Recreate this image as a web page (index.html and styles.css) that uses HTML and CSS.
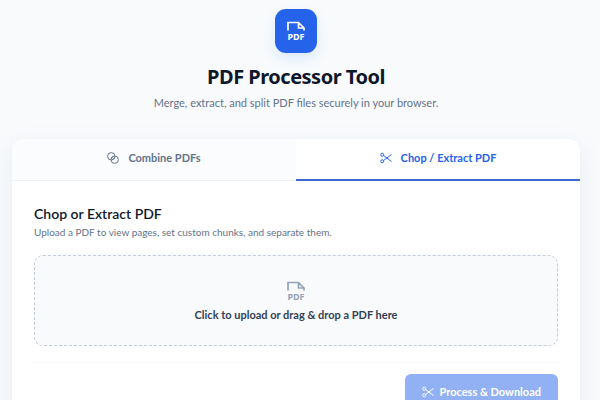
FILE: index.html
```
<!DOCTYPE html>
<html lang="en">

<head>
  <meta charset="UTF-8" />
  <meta name="viewport" content="width=device-width, initial-scale=1.0" />
  <title>PDF Processor Tool</title>
  <link rel="stylesheet" href="styles.css">
</head>

<body>
  <div class="container">
    <header class="header">
      <div class="logo">
        <svg class="icon-large" viewBox="0 0 20 20">
          <path d="M2 9.5V1.5H12.5L18 7V9.5M12.5 1.5V7H18" />
          <text x="10" y="19" text-anchor="middle">PDF</text>
        </svg>
      </div>
      <h1>PDF Processor Tool</h1>
      <p>Merge, extract, and split PDF files securely in your browser.</p>
    </header>

    <main class="card">
      <div class="tabs" role="tablist">
        <button type="button" class="tab" role="tab" aria-selected="false">
          <svg class="icon" viewBox="0 0 12 12">
            <circle cx="4.3" cy="4.3" r="3.7" />
            <circle cx="7.7" cy="7.7" r="3.7" />
            <path d="M4.3 6.3L6.3 4.3M5.6 7.6L7.6 5.6" />
          </svg>
          Combine PDFs
        </button>
        <button type="button" class="tab active" role="tab" aria-selected="true">
          <svg class="icon" viewBox="0 0 12 12">
            <circle cx="2.2" cy="2.7" r="1.5" />
            <circle cx="2.2" cy="9.3" r="1.5" />
            <path d="M3.5 3.5L11.5 9.5M3.5 8.5L11.5 2.5" />
          </svg>
          Chop / Extract PDF
        </button>
      </div>

      <section class="panel">
        <h2>Chop or Extract PDF</h2>
        <p class="description">Upload a PDF to view pages, set custom chunks, and separate them.</p>

        <label class="dropzone" for="pdf-file">
          <svg class="icon-large" viewBox="0 0 20 20">
            <path d="M2 9.5V1.5H12.5L18 7V9.5M12.5 1.5V7H18" />
            <text x="10" y="19" text-anchor="middle">PDF</text>
          </svg>
          <span>Click to upload or drag &amp; drop a PDF here</span>
        </label>
        <input type="file" id="pdf-file" class="file-input" accept="application/pdf">

        <div class="actions">
          <button type="button" class="process" disabled>
            <svg class="icon" viewBox="0 0 12 12">
              <circle cx="2.2" cy="2.7" r="1.5" />
              <circle cx="2.2" cy="9.3" r="1.5" />
              <path d="M3.5 3.5L11.5 9.5M3.5 8.5L11.5 2.5" />
            </svg>
            Process &amp; Download
          </button>
        </div>
      </section>
    </main>
  </div>
</body>

</html>
```

FILE: styles.css
```
* {
  box-sizing: border-box;
}

body {
  margin: 0;
  background-color: #f8fafc;
  color: #0f172a;
  font-family: Lato, "Open Sans", sans-serif;
  font-size: 11px;
  line-height: 16px;
}

h1,
h2,
p {
  margin: 0;
}

button {
  border: 0;
  font: inherit;
}

.icon,
.icon-large {
  flex: none;
  overflow: visible;
  fill: none;
  stroke: currentColor;
}

.icon {
  width: 12px;
  height: 12px;
}

.icon-large {
  width: 20px;
  height: 20px;
  stroke-width: 1.7;
}

.icon-large text {
  fill: currentColor;
  stroke: none;
  font-family: "Noto Sans", sans-serif;
  font-size: 9px;
  font-weight: 700;
}

.container {
  max-width: 680px;
  margin: 0 auto;
  padding: 9px 20px 32px 12px;
}

/* Header */
.header {
  display: flex;
  flex-direction: column;
  align-items: center;
  text-align: center;
}

.logo {
  display: flex;
  align-items: center;
  justify-content: center;
  width: 42px;
  height: 44px;
  border-radius: 11px;
  background-color: #2563eb;
  color: #fff;
  box-shadow: 0 6px 12px #dbeafe;
}

.header h1 {
  margin-top: 10px;
  font-family: "Noto Sans", sans-serif;
  font-size: 20px;
  font-weight: 700;
  line-height: 28px;
  letter-spacing: -0.5px;
}

.header p {
  margin-top: 4px;
  color: #64748b;
}

/* Card */
.card {
  margin-top: 28px;
  border-radius: 12px;
  background-color: #fff;
  box-shadow: 0 6px 20px rgba(148, 163, 184, 0.15);
}

.tabs {
  display: grid;
  grid-template-columns: 1fr 1fr;
}

.tab {
  display: flex;
  align-items: center;
  justify-content: center;
  gap: 9px;
  height: 42px;
  padding: 0 0 3px;
  border-bottom: 1px solid #edf2f7;
  border-radius: 12px 0 0;
  background-color: #fafcfe;
  color: #64748b;
  font-weight: 700;
}

.tab.active {
  padding-bottom: 2px;
  border-bottom: 2px solid #3b69d4;
  border-radius: 0 12px 0 0;
  background-color: #fff;
  color: #2563eb;
}

.panel {
  padding: 23px 22px;
}

.panel h2 {
  font-size: 14px;
  font-weight: 600;
  line-height: 20px;
}

.description {
  color: #64748b;
  font-size: 10px;
}

.dropzone {
  display: flex;
  flex-direction: column;
  align-items: center;
  justify-content: center;
  gap: 6px;
  min-height: 91px;
  margin-top: 15px;
  padding-top: 2px;
  border: 1px dashed #c3ccd9;
  border-radius: 9px;
  background-color: #f8fafc;
  color: #94a3b8;
  cursor: pointer;
}

.dropzone span {
  color: #334155;
  font-weight: 700;
}

.file-input {
  display: none;
}

.actions {
  display: flex;
  justify-content: flex-end;
  margin-top: 16px;
  padding-top: 11px;
  border-top: 1px solid #f6f8fb;
}

.process {
  display: flex;
  align-items: center;
  gap: 6px;
  padding: 10px 17px;
  border-radius: 6px;
  background-color: #92b1f5;
  color: #fff;
  font-weight: 700;
}
```
